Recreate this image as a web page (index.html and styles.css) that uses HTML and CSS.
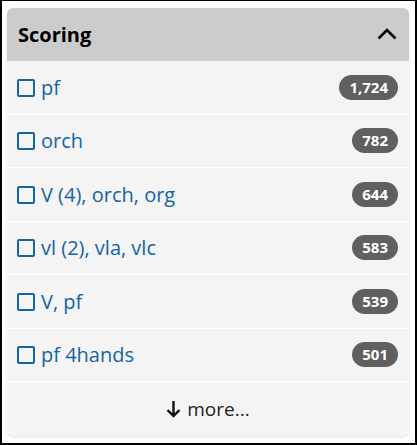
FILE: index.html
```html
<!DOCTYPE html>
<html>
<head>
<meta charset="utf-8">
<link rel="stylesheet" href="styles.css">
</head>
<body>
<div class="card">
  <div class="card-header">
    <span class="title">Scoring</span>
    <svg class="chevron" width="20" height="12" viewBox="0 0 20 12"><polyline points="1.5,10.5 10,2 18.5,10.5" fill="none" stroke="#000" stroke-width="2.6"/></svg>
  </div>
  <ul class="list">
    <li class="item"><a class="label"><span class="box"></span>pf</a><span class="badge">1,724</span></li>
    <li class="item"><a class="label"><span class="box"></span>orch</a><span class="badge">782</span></li>
    <li class="item"><a class="label"><span class="box"></span>V (4), orch, org</a><span class="badge">644</span></li>
    <li class="item"><a class="label"><span class="box"></span>vl (2), vla, vlc</a><span class="badge">583</span></li>
    <li class="item"><a class="label"><span class="box"></span>V, pf</a><span class="badge">539</span></li>
    <li class="item"><a class="label"><span class="box"></span>pf 4hands</a><span class="badge">501</span></li>
  </ul>
  <div class="more">
    <svg class="arrow" width="15" height="18" viewBox="0 0 15 18"><path d="M7.5 1 V16 M1.5 10 L7.5 16 L13.5 10" fill="none" stroke="#111" stroke-width="2.4"/></svg>
    <span>more...</span>
  </div>
</div>
</body>
</html>
```
FILE: styles.css
```css
* { box-sizing: border-box; }
html, body { margin: 0; padding: 0; }
body {
  width: 417px;
  height: 445px;
  border-top: 1px solid #000;
  border-left: 2px solid #000;
  border-right: 2px solid #000;
  border-bottom: 2px solid #000;
  padding: 7px 6px 0 5px;
  background: #fff;
  font-family: "Open Sans", "Noto Sans", sans-serif;
}
.card {
  background: #f4f4f4;
  border-radius: 6px;
  overflow: hidden;
  box-shadow: 0 1px 3px rgba(0,0,0,0.12);
}
.card-header {
  background: #cccccc;
  height: 53px;
  display: flex;
  align-items: center;
  justify-content: space-between;
  padding: 0 12px 0 11px;
}
.title {
  font-size: 20px;
  font-weight: 700;
  color: #000;
}
.chevron { display: block; margin-top: -2px; }
.list { list-style: none; margin: 0; padding: 0; }
.item {
  height: 53.5px;
  border-bottom: 1px solid #fff;
  display: flex;
  align-items: center;
  justify-content: space-between;
  padding: 0 11px 0 10px;
}
.label {
  display: flex;
  align-items: center;
  color: #1663a4;
  font-size: 20px;
}
.box {
  width: 18px;
  height: 18px;
  border: 2px solid #1663a4;
  border-radius: 2px;
  margin-right: 6px;
  margin-top: 1px;
}
.badge {
  background: #606060;
  color: #fff;
  font-weight: 700;
  font-size: 15px;
  border-radius: 13px;
  height: 25px;
  line-height: 25px;
  padding: 0 10px;
}
.more {
  height: 54px;
  display: flex;
  align-items: center;
  justify-content: center;
  gap: 6px;
  font-size: 19px;
  color: #222;
}
.arrow { display: block; }
```
